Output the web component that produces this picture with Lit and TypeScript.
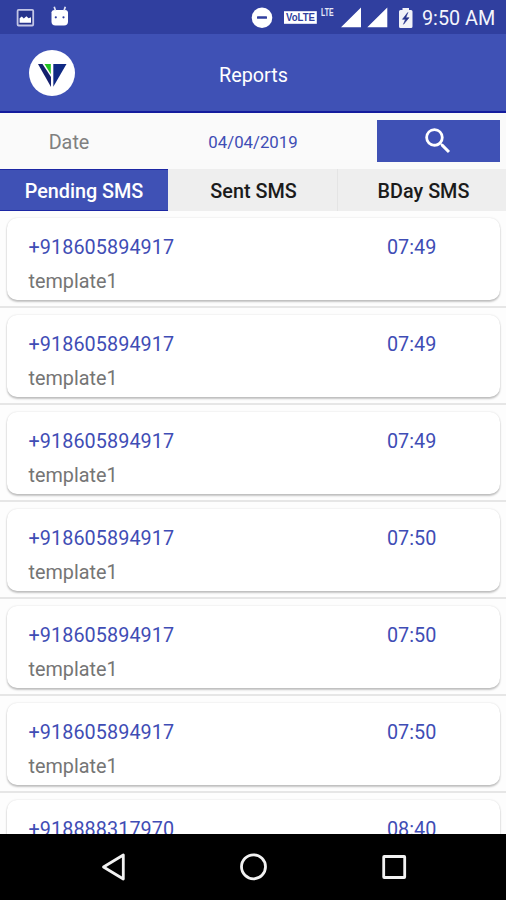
import { LitElement, html, css, nothing } from "lit";
import { customElement, property, state } from "lit/decorators.js";
import { classMap } from "lit/directives/class-map.js";

@customElement("status-bar")
class StatusBar extends LitElement {
  static styles = css`
    :host { display: flex; height: 34px; background: #303f9f; color: #fff; }
    svg { display: block; width: 418px; height: 34px; flex: none; }
    .clock { flex: none; margin-left: 4px; font-size: 19.8px; line-height: 38px; white-space: nowrap; color: #f4f5fc; }
    .volte { font: 700 10px "Liberation Sans", Arial, sans-serif; fill: #303f9f; }
    .lte { font: 700 11px "Liberation Sans", Arial, sans-serif; fill: #e6e8f8; }
  `;
  render() {
    return html`
      <svg viewBox="0 0 418 34">
        <rect x="17.6" y="9.9" width="15.6" height="15.6" rx="1" fill="#26338c" stroke="#c3c6e6" stroke-width="1.8" />
        <path d="M19.6 22.8v-4.6l2.2-1.600 2 1.800 2.600-2.200 2.200 2 2.400-1v5.600z" fill="#fff" />
        <path d="M51.500 12.500h16.500v9a4 4 0 0 1-4 4h-8.500a4 4 0 0 1-4-4z" fill="#fff" />
        <path d="M51.500 13a3 3 0 0 1 3-3h10.500a3 3 0 0 1 3 3z" fill="#fff" />
        <path d="M54.200 6.800l1.300 4M65.300 6.800l-1.300 4" stroke="#e4e6f6" stroke-width="1.700" />
        <circle cx="55.800" cy="17.300" r="1.100" fill="#303f9f" /><circle cx="63.500" cy="17.300" r="1.100" fill="#303f9f" />
        <circle cx="262" cy="17.800" r="10.300" fill="#fff" />
        <rect x="257" y="16.300" width="10" height="2.500" rx=".6" fill="#303f9f" />
        <rect x="284" y="11.200" width="32.800" height="12.600" fill="#fff" />
        <text class="volte" x="286" y="21.200" textLength="29" lengthAdjust="spacingAndGlyphs">VoLTE</text>
        <text class="lte" x="321" y="16" textLength="12.500" lengthAdjust="spacingAndGlyphs">LTE</text>
        <path d="M361 7.500v19.700h-20zM387.300 7.500v19.700h-20z" fill="#fff" />
        <path d="M399 11.500a1.500 1.500 0 0 1 1.500-1.500h2v-2h6.500v2h2a1.500 1.500 0 0 1 1.500 1.500v15a1.500 1.500 0 0 1-1.500 1.500h-10.500a1.500 1.500 0 0 1-1.500-1.500z" fill="#f1f2f8" />
        <path d="M407.800 12.500l-5.300 6.800h3l-2 5 5.500-6.600h-3.200z" fill="#26338c" stroke="#26338c" stroke-width=".6" />
      </svg>
      <span class="clock">9:50 AM</span>
    `;
  }
}

@customElement("sms-row")
class SmsRow extends LitElement {
  @property() phone = "";
  @property() time = "";
  @property() message = "";
  static styles = css`
    :host { display: block; flex: none; box-sizing: border-box; height: 97px; padding: 7px 6px 0 7px; border-bottom: 2px solid #e6e6e6; }
    .card { box-sizing: border-box; height: 82px; border-radius: 10px; background: #fff; padding: 14px 0 0 21.500px;
      box-shadow: 0 2px 2px rgba(0,0,0,.22), 0 0 2px rgba(0,0,0,.14); }
    .line { display: grid; grid-template-columns: 358.500px 1fr; color: #3f4db5; font-size: 19.8px; line-height: 32px; }
    .phone { letter-spacing: .08px; }
    .message { font-size: 19.8px; line-height: 35px; color: #757575; }
  `;
  render() {
    return html`<div class="card">
      <div class="line"><span class="phone">${this.phone}</span><span>${this.time}</span></div>
      ${this.message ? html`<div class="message">${this.message}</div>` : nothing}
    </div>`;
  }
}

const tabs = ["Pending SMS", "Sent SMS", "BDay SMS"];
const messages = [
  ["+918605894917", "07:49", "template1"],
  ["+918605894917", "07:49", "template1"],
  ["+918605894917", "07:49", "template1"],
  ["+918605894917", "07:50", "template1"],
  ["+918605894917", "07:50", "template1"],
  ["+918605894917", "07:50", "template1"],
  ["+918888317970", "08:40", ""],
];

@customElement("app-root")
class AppRoot extends LitElement {
  @state() private active = 0;
  static styles = css`
    :host { display: flex; flex-direction: column; width: 506px; height: 900px; overflow: hidden; background: #fdfdfd; font-family: Roboto, sans-serif; }
    status-bar, .appbar, .filter, .tabs, .nav { flex: none; }
    .appbar { box-sizing: border-box; height: 79px; background: #3f51b5; border-bottom: 2px solid #141c9e; display: grid; grid-template-columns: 1fr auto 1fr; align-items: center; color: #fff; font-size: 19.8px; }
    .logo { width: 48px; height: 48px; margin-left: 27.500px; margin-top: 1px; }
    .title { padding: 5px 0 0 1px; }
    .filter { box-sizing: border-box; height: 56px; background: #fafafa; display: grid; grid-template-columns: 138px 230px 123px; align-items: center; text-align: center; }
    .label { font-size: 19.8px; color: #808080; padding-top: 2px; }
    .date { font-size: 16.800px; color: #3f4db5; padding-top: 2px; }
    .search { margin-left: 8.500px; width: 123px; height: 42px; border: 0; padding: 0; background: #3f51b5; display: flex; align-items: center; justify-content: center; }
    .tabs { height: 42px; display: grid; grid-template-columns: 168px 170px 168px; }
    .tab { border: 0; padding: 2px 0 0 2px; font: 500 19.800px Roboto, sans-serif; color: #1b1b1b; background: #eee; border-right: 1px solid #e4e4e4; box-sizing: border-box; }
    .tab:last-child { border-right: 0; padding-left: 3px; }
    .tab.active { color: #fff; background: #3f51b5; border: solid #1c27a4; border-width: 1px 0; padding: 2px 0 0; }
    .list { flex: 1; min-height: 0; overflow: hidden; display: flex; flex-direction: column; }
    .nav { height: 66px; background: #000; }
    .nav svg { display: block; }
  `;
  render() {
    return html`
      <status-bar></status-bar>
      <header class="appbar">
        <svg class="logo" viewBox="0 0 48 48">
          <circle cx="24" cy="24" r="23" fill="#fff" />
          <path d="M10 15h4.500l8.500 13v10z" fill="#15206e" />
          <path d="M16.500 15h6.300v10.200z" fill="#22c322" />
          <path d="M25.300 15h13.200l-13.200 22.800z" fill="#102a84" />
        </svg>
        <span class="title">Reports</span>
      </header>
      <section class="filter">
        <span class="label">Date</span>
        <span class="date">04/04/2019</span>
        <button class="search" aria-label="Search">
          <svg width="34" height="34" viewBox="0 0 24 24"><path fill="#fff" d="M15.500 14h-.79l-.28-.27A6.470 6.470 0 0 0 16 9.500 6.500 6.500 0 1 0 9.500 16c1.610 0 3.090-.59 4.230-1.570l.27.28v.79l5 4.990L20.490 19l-4.990-5zm-6 0C7.010 14 5 11.990 5 9.500S7.010 5 9.500 5 14 7.010 14 9.500 11.990 14 9.500 14z"/></svg>
        </button>
      </section>
      <nav class="tabs">
        ${tabs.map((t, i) => html`<button class=${classMap({ tab: true, active: i === this.active })} @click=${() => (this.active = i)}>${t}</button>`)}
      </nav>
      <main class="list">
        ${messages.map(([phone, time, message]) => html`<sms-row .phone=${phone} .time=${time} .message=${message}></sms-row>`)}
      </main>
      <footer class="nav">
        <svg width="506" height="66" viewBox="0 0 506 66" fill="none" stroke="#f2f2f2" stroke-width="2.800">
          <path d="M123.300 21v24L103.500 33z" stroke-linejoin="round" />
          <circle cx="253.500" cy="32.800" r="12" />
          <rect x="383.700" y="22.500" width="21" height="21" rx=".5" />
        </svg>
      </footer>
    `;
  }
}
